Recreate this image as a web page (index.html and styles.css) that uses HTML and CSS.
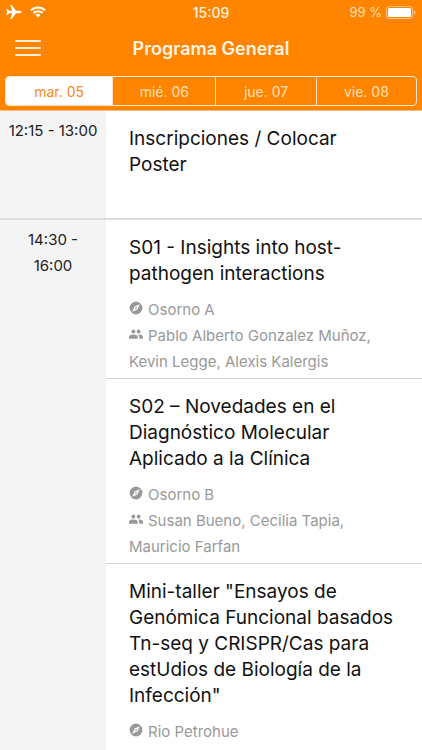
FILE: index.html
```
<!DOCTYPE html>
<html lang="es">
<head>
<meta charset="utf-8">
<meta name="viewport" content="width=device-width, initial-scale=1">
<title>Programa General</title>
<link rel="stylesheet" href="styles.css">
</head>
<body>
<svg class="sprite" aria-hidden="true">
  <symbol id="compass" viewBox="0 0 24 24"><path fill-rule="evenodd" d="M12 1a11 11 0 1 0 0 22 11 11 0 0 0 0-22zM14.500 14.500 5.500 18.500l4-9 9-4-4 9zM12 10.500a1.500 1.500 0 1 0 0 3 1.500 1.500 0 0 0 0-3z"/></symbol>
  <symbol id="people" viewBox="0 0 24 24"><path d="M16.500 11a3.300 3.300 0 1 0 0-6.600 3.300 3.300 0 0 0 0 6.600zM7.500 11a3.300 3.300 0 1 0 0-6.600 3.300 3.300 0 0 0 0 6.600zM7.500 13C5 13 0 14.200 0 16.800V20h15v-3.200C15 14.200 10 13 7.500 13zM16.500 13l-1 .1c1.200.8 2 2 2 3.700V20H24v-3.200C24 14.200 19 13 16.500 13z"/></symbol>
</svg>
<header class="header">
  <div class="status">
    <div class="status-side">
      <svg class="plane" viewBox="0 0 16 16"><path d="M15.500 8c0-.8-.8-1.200-1.800-1.200H10L5.800 1H4.200l2 5.800H3L1.500 5H.3l.9 3-.9 3h1.200L3 9.200h3.200l-2 5.800h1.600L10 9.200h3.700c1 0 1.800-.4 1.800-1.200z"/></svg>
      <svg class="wifi" viewBox="0 0 16 12"><path d="M1 4.300a10 10 0 0 1 14 0M3.500 7a6.400 6.400 0 0 1 9 0"/><path class="solid" d="M8 11.500 5.500 9a3.500 3.500 0 0 1 5 0z"/></svg>
    </div>
    <span class="clock">15:09</span>
    <div class="status-side end">
      <span>99 %</span>
      <svg class="battery" viewBox="0 0 30 13"><rect class="shell" x=".5" y=".5" width="26" height="12" rx="3"/><rect x="2" y="2" width="23" height="9" rx="1.500"/><path class="tip" d="M28 4.500c2 .5 2 3.500 0 4z"/></svg>
    </div>
  </div>
  <div class="navbar">
    <button class="menu" type="button" aria-label="Menú"><span></span><span></span><span></span></button>
    <h1>Programa General</h1>
  </div>
  <nav class="days" aria-label="Día">
    <button class="active" type="button">mar. 05</button>
    <button type="button">mié. 06</button>
    <button type="button">jue. 07</button>
    <button type="button">vie. 08</button>
  </nav>
</header>
<main class="program">
  <section class="slot">
    <div class="time">12:15 - 13:00</div>
    <div class="sessions">
      <article><h2>Inscripciones / Colocar Poster</h2></article>
    </div>
  </section>
  <section class="slot">
    <div class="time">14:30 - 16:00</div>
    <div class="sessions">
      <article>
        <h2>S01 - Insights into host-pathogen interactions</h2>
        <p><svg class="icon"><use href="#compass"/></svg>Osorno A</p>
        <p><svg class="icon"><use href="#people"/></svg>Pablo Alberto Gonzalez Muñoz, Kevin Legge, Alexis Kalergis</p>
      </article>
      <article>
        <h2>S02 – Novedades en el Diagnóstico Molecular Aplicado a la Clínica</h2>
        <p><svg class="icon"><use href="#compass"/></svg>Osorno B</p>
        <p><svg class="icon"><use href="#people"/></svg>Susan Bueno, Cecilia Tapia, Mauricio Farfan</p>
      </article>
      <article>
        <h2>Mini-taller "Ensayos de Genómica Funcional basados Tn-seq y CRISPR/Cas para estUdios de Biología de la Infección"</h2>
        <p><svg class="icon"><use href="#compass"/></svg>Rio Petrohue</p>
      </article>
    </div>
  </section>
</main>
</body>
</html>
```
FILE: styles.css
```
* { box-sizing: border-box; }
body {
  margin: 0;
  min-height: 100vh;
  display: flex;
  flex-direction: column;
  font-family: Inter, "Liberation Sans", sans-serif;
  color: #111;
  background: #fff;
}
h1, h2, p { margin: 0; font-weight: 400; }
button { font: inherit; border: 0; background: none; padding: 0; }
.sprite { position: absolute; width: 0; height: 0; }

.header {
  background: #ff8500;
  color: #fff3e2;
  padding-bottom: 4px;
  border-bottom: 1px solid #f9bd80;
}
.status {
  display: grid;
  grid-template-columns: 1fr auto 1fr;
  align-items: center;
  height: 24px;
  padding: 0 6px;
  font-size: 13px;
}
.status-side { display: flex; align-items: center; gap: 8px; }
.status-side.end { justify-content: flex-end; gap: 4px; color: #ffe0b8; }
.clock { font-size: 14px; font-weight: 500; }
.status svg { fill: #fff; }
.plane { width: 16px; height: 16px; }
.wifi { width: 16px; height: 12px; }
.wifi path { fill: none; stroke: #fff; stroke-width: 2; }
.wifi .solid { fill: #fff; stroke: none; }
.battery { width: 30px; height: 13px; }
.status .battery .shell { fill: none; stroke: #ffc88a; }
.battery .tip { fill: #ffc88a; }

.navbar {
  display: grid;
  grid-template-columns: 1fr auto 1fr;
  align-items: center;
  height: 48px;
  margin-bottom: 4px;
  padding: 0 15px;
}
.menu { display: flex; flex-direction: column; gap: 5px; width: 26px; }
.menu span { height: 2px; border-radius: 1px; background: #fff0dc; }
h1 { font-size: 18px; font-weight: 600; }

.days {
  display: grid;
  grid-template-columns: 107fr 104fr 101fr 101fr;
  height: 30px;
  margin: 0 5px;
  border: 1px solid #ffe8cc;
  border-radius: 4px;
  overflow: hidden;
}
.days button { color: #ffe0b8; font-size: 14px; }
.days button + button { border-left: 1px solid #ffe0b8; }
.days .active { background: #fff; color: #f58a1c; }

.program { flex: 1; display: flex; flex-direction: column; }
.slot { display: flex; min-height: 107px; }
.slot:last-child { flex: 1; }
.slot + .slot { border-top: 2px solid #dcdcdc; }
.time {
  flex: 0 0 106px;
  padding: 7px;
  background: #f4f4f4;
  color: #222;
  font-size: 15px;
  line-height: 26px;
  text-align: center;
}
.sessions { flex: 1; min-width: 0; }
article { padding: 15px 23px 3px; }
article + article { border-top: 1px solid #d4d4d4; }
h2 { font-size: 19px; line-height: 26px; margin-bottom: 10px; }
p { font-size: 15px; line-height: 26px; color: #999; }
.icon { width: 14px; height: 14px; margin-right: 5px; fill: #999; }
```
